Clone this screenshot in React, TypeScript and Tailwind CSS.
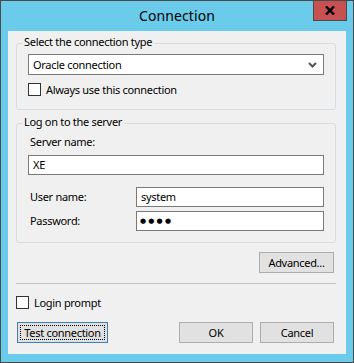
import React from "react";

const font = { fontFamily: '"Noto Sans", "Open Sans", Arial, sans-serif' };

function Check() {
  return <div className="w-[13px] h-[13px] border border-[#333333] bg-white shrink-0" />;
}

function Btn({ children, w, focus }: { children: React.ReactNode; w: string; focus?: boolean }) {
  return (
    <div
      className={
        "h-[21px] flex items-center justify-center bg-[#e1e1e1] text-black border " +
        w +
        (focus
          ? " border-[#3c7fb1] outline-1 outline-dotted outline-black outline-offset-[-4px]"
          : " border-[#adadad]")
      }
    >
      {children}
    </div>
  );
}

export default function App() {
  return (
    <div
      className="relative w-[354px] h-[363px] bg-[#6acbea] border border-[#4a4a4a] flex flex-col text-black"
      style={font}
    >
      <div className="h-[30px] flex items-center justify-center text-[14px] leading-[20px] tracking-[0.1px]">Connection</div>
      <div className="absolute top-[-1px] right-[6px] w-[34px] h-[21px] bg-[#c75050] border border-[#4a4a4a] flex items-center justify-center">
        <svg width="10" height="9" viewBox="0 0 10 9">
          <path d="M1 0.5 L9 8.5 M9 0.5 L1 8.5" stroke="#000" strokeWidth="2.4" />
        </svg>
      </div>

      <div className="mx-[7px] h-[323px] bg-[#f0f0f0] flex flex-col pl-[8px] text-[11px] leading-[16px] tracking-[-0.3px]">
        <div className="relative mt-[12px] w-[320px] h-[67px] border border-[#d5dde3] rounded-[3px] px-[11px] pt-[10px]">
          <span className="absolute left-[5px] top-[-10px] px-[2px] bg-[#f0f0f0]">Select the connection type</span>
          <div className="h-[21px] w-[296px] border border-[#7a7a7a] bg-white flex items-center pl-[4px] pr-[6px]">
            <span className="flex-1">Oracle connection</span>
            <svg width="9" height="6" viewBox="0 0 9 6">
              <path d="M1 1 L4.5 4.5 L8 1" stroke="#555" strokeWidth="2" fill="none" />
            </svg>
          </div>
          <div className="mt-[8px] flex items-center gap-[5px] h-[13px]">
            <Check />
            <span>Always use this connection</span>
          </div>
        </div>

        <div className="relative mt-[13px] w-[320px] h-[120px] border border-[#d5dde3] rounded-[3px] px-[11px] pt-[10px]">
          <span className="absolute left-[5px] top-[-10px] px-[2px] bg-[#f0f0f0]">Log on to the server</span>
          <div className="pl-[2px] h-[16px]">Server name:</div>
          <div className="mt-[5px] h-[20px] w-[296px] border border-[#7a7a7a] bg-white flex items-center pl-[4px]">XE</div>
          <div className="mt-[12px] h-[20px] flex items-center">
            <span className="w-[108px] pl-[2px]">User name:</span>
            <div className="h-[20px] w-[188px] border border-[#7a7a7a] bg-white flex items-center pl-[4px]">system</div>
          </div>
          <div className="mt-[4px] h-[20px] flex items-center">
            <span className="w-[108px] pl-[2px]">Password:</span>
            <div
              className="h-[20px] w-[188px] border border-[#7a7a7a] bg-white flex items-center pl-[3px] text-[7px] tracking-[2.2px] leading-[8px]"
              style={{ fontFamily: '"DejaVu Sans", sans-serif' }}
            >
              ●●●●
            </div>
          </div>
        </div>

        <div className="mt-[9px] ml-[243px]">
          <Btn w="w-[75px]">Advanced...</Btn>
        </div>

        <div className="mt-[10px] h-px w-[320px] bg-[#c4c4c4]" />

        <div className="mt-[12px] flex items-center gap-[5px] h-[13px]">
          <Check />
          <span>Login prompt</span>
        </div>

        <div className="mt-[13px] flex w-[318px] pl-[1px]">
          <Btn w="w-[91px]" focus>
            Test connection
          </Btn>
          <div className="ml-auto flex gap-[7px]">
            <Btn w="w-[74px]">OK</Btn>
            <Btn w="w-[74px]">Cancel</Btn>
          </div>
        </div>
      </div>
    </div>
  );
}
